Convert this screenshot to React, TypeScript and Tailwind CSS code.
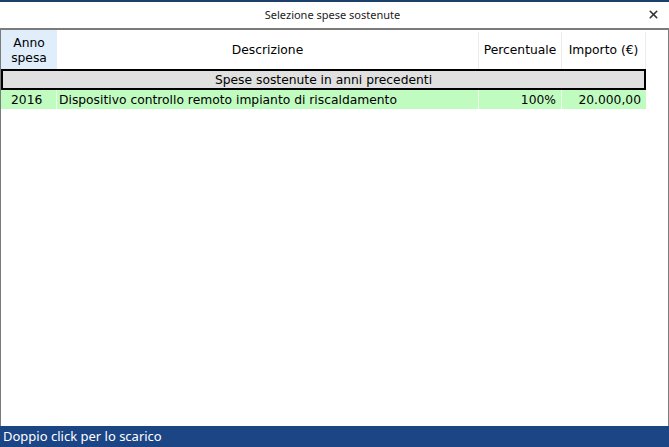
import { X } from 'lucide-react';

const cell = "font-['DejaVu_Sans',Verdana,sans-serif] text-[12.3px] text-black";

export default function App() {
  return (
    <div className="flex h-[447px] w-[669px] flex-col border-t-2 border-[#1f3f6b] bg-white">
      <div className="relative flex h-[26px] shrink-0 items-center justify-center pr-[4px]">
        <span className="font-['Noto_Sans',sans-serif] text-[11px] text-[#222]">Selezione spese sostenute</span>
        <X className="absolute right-[9px] top-[6px] h-[13px] w-[13px] text-[#333]" strokeWidth={3} />
      </div>
      <div className="flex-1 border-x border-t-2 border-[#7b7b7b]">
        <div className="flex h-[39px] w-[645px] pt-[2px]">
          <div className={`-mt-[2px] flex w-[56px] items-center justify-center bg-[#dfeefa] pt-[2px] text-center leading-[15px] ${cell}`}>
            Anno<br />spesa
          </div>
          <div className={`flex w-[422px] items-center justify-center border-r border-[#ececec] ${cell}`}>Descrizione</div>
          <div className={`flex w-[83px] items-center justify-center border-r border-[#ececec] ${cell}`}>Percentuale</div>
          <div className={`flex w-[84px] items-center justify-center border-r border-[#ececec] ${cell}`}>Importo (€)</div>
        </div>
        <div className={`flex h-[21px] w-[645px] items-center justify-center border-2 border-black bg-[#e0e0e0] pt-[2px] ${cell}`}>
          Spese sostenute in anni precedenti
        </div>
        <div className={`flex h-[19px] w-[645px] items-center bg-[#c0fcc0] ${cell}`}>
          <div className="h-full w-[56px] border-r border-[#e8ffe8] pl-[10px] pt-[1px] leading-[19px]">2016</div>
          <div className="h-full w-[422px] border-r border-[#e8ffe8] pl-[2px] pt-[1px] leading-[19px]">Dispositivo controllo remoto impianto di riscaldamento</div>
          <div className="h-full w-[83px] border-r border-[#e8ffe8] pr-[5px] pt-[1px] text-right leading-[19px]">100%</div>
          <div className="h-full w-[84px] pr-[5px] pt-[1px] text-right leading-[19px]">20.000,00</div>
        </div>
      </div>
      <div className="flex h-[21px] shrink-0 items-center bg-[#1c4585] pl-[3px]">
        <span className="font-['Noto_Sans',sans-serif] text-[13px] text-white">Doppio click per lo scarico</span>
      </div>
    </div>
  );
}
